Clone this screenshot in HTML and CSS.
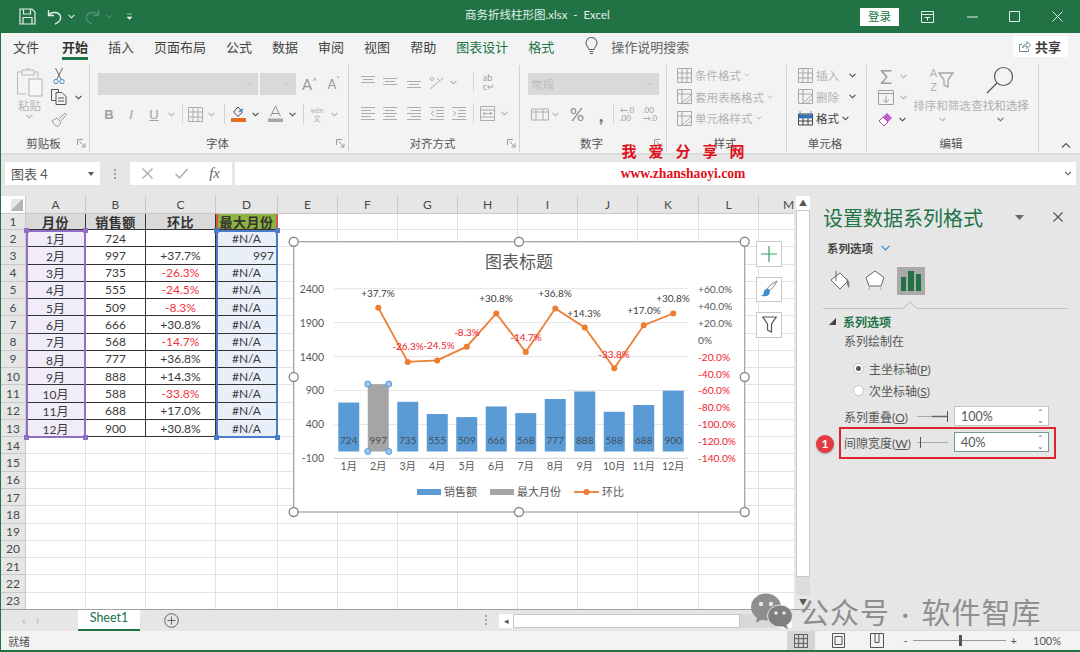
FILE: index.html
```html
<!DOCTYPE html>
<html lang="zh-CN">
  <head>
    <meta charset="UTF-8" />
    <title>商务折线柱形图.xlsx - Excel</title>
    <link rel="stylesheet" href="styles.css">
  </head>
  <body>
    <svg class="sprites" width="0" height="0">
      <symbol id="chev" viewBox="0 0 7 5"><path d="M.6.8 3.5 3.8 6.4.8" fill="none" stroke="currentColor" stroke-width="1.1"/></symbol>
      <symbol id="launch" viewBox="0 0 9 9"><path d="M.5 6V.5H6M2.5 2.5 8 8M8 4.5V8H4.5" fill="none" stroke="currentColor"/></symbol>
      <symbol id="al-top" viewBox="0 0 14 14"><path d="M0 1.5h14M2 4.5h10M0 7.5h14" fill="none" stroke="currentColor"/></symbol>
      <symbol id="al-mid" viewBox="0 0 14 14"><path d="M0 3.5h14M2 6.5h10M0 9.5h14" fill="none" stroke="currentColor"/></symbol>
      <symbol id="al-bot" viewBox="0 0 14 14"><path d="M0 6.5h14M2 9.5h10M0 12.5h14" fill="none" stroke="currentColor"/></symbol>
      <symbol id="al-left" viewBox="0 0 14 14"><path d="M0 1.5h14M0 4.5h10M0 7.5h14M0 10.5h10M0 13.5h14" fill="none" stroke="currentColor"/></symbol>
      <symbol id="al-center" viewBox="0 0 14 14"><path d="M0 1.5h14M2 4.5h10M0 7.5h14M2 10.5h10M0 13.5h14" fill="none" stroke="currentColor"/></symbol>
      <symbol id="al-right" viewBox="0 0 14 14"><path d="M0 1.5h14M4 4.5h10M0 7.5h14M4 10.5h10M0 13.5h14" fill="none" stroke="currentColor"/></symbol>
      <symbol id="indent-l" viewBox="0 0 14 14"><path d="M0 1.5h14M6 4.5h8M6 7.5h8M6 10.5h8M0 13.5h14M4 5 1 7.5 4 10" fill="none" stroke="currentColor"/></symbol>
      <symbol id="indent-r" viewBox="0 0 14 14"><path d="M0 1.5h14M6 4.5h8M6 7.5h8M6 10.5h8M0 13.5h14M1 5l3 2.5L1 10" fill="none" stroke="currentColor"/></symbol>
      <symbol id="table-a" viewBox="0 0 15 15"><path d="M.5.5h14v14H.5zM.5 5h14M.5 10h14M5 .5v14M10 .5v14" fill="none" stroke="currentColor"/></symbol>
      <symbol id="table-b" viewBox="0 0 15 15"><path d="M.5.5h14v14H.5zM.5 5h14M5 .5v14M5 14 14 6M9 14l5-4" fill="none" stroke="currentColor"/></symbol>
    </svg>

    <div class="app">
      <header class="titlebar">
        <div class="quick">
          <svg class="q-save" width="17" height="17" viewBox="0 0 17 17"><path d="M1 1h12l3 3v12H1zM4.5 1v5h7V1M4 16V9.500h9V16" fill="none" stroke="currentColor" stroke-width="1.2"/></svg>
          <svg class="q-undo" width="15" height="16" viewBox="0 0 15 16"><path d="M1.500 1v5.500H7M1.500 6.500C4 2.500 12 2 13.500 7.500c.8 3.500-2 6.500-5.500 7.500" fill="none" stroke="currentColor" stroke-width="1.4"/></svg>
          <svg class="q-chev" width="7" height="5"><use href="#chev"/></svg>
          <svg class="q-redo" width="15" height="16" viewBox="0 0 15 16"><path d="M13.500 1v5.500H8M13.500 6.500C11 2.500 3 2 1.500 7.500.7 11 3.500 14 7 15" fill="none" stroke="currentColor" stroke-width="1.4"/></svg>
          <svg class="q-chev dim" width="7" height="5"><use href="#chev"/></svg>
          <svg class="q-more" width="7" height="7" viewBox="0 0 7 7"><path d="M1 1h5M1 4h5L3.500 6.500z" fill="currentColor" stroke="currentColor" stroke-width=".6"/></svg>
        </div>
        <div class="doc-title">商务折线柱形图.xlsx&nbsp; - &nbsp;Excel</div>
        <div class="window-btns">
          <span class="login">登录</span>
          <svg class="w-restore" width="13" height="12" viewBox="0 0 13 12"><path d="M.5.5h12v11H.5zM.5 3.500h12M3.500 6.500h6M6.500 9.500v-3" fill="none" stroke="currentColor"/></svg>
          <svg class="w-min" width="11" height="2"><path d="M0 1h11" stroke="currentColor"/></svg>
          <svg class="w-max" width="11" height="11"><path d="M.5.5h10v10H.5z" fill="none" stroke="currentColor"/></svg>
          <svg class="w-close" width="11" height="11"><path d="M.5.5l10 10M10.500.5l-10 10" stroke="currentColor"/></svg>
        </div>
      </header>

      <nav class="tabs">
        <span class="tab first">文件</span>
        <span class="tab active">开始</span>
        <span class="tab">插入</span>
        <span class="tab">页面布局</span>
        <span class="tab">公式</span>
        <span class="tab">数据</span>
        <span class="tab">审阅</span>
        <span class="tab">视图</span>
        <span class="tab">帮助</span>
        <span class="tab ctx">图表设计</span>
        <span class="tab ctx">格式</span>
        <svg class="bulb" width="13" height="18" viewBox="0 0 13 18"><path d="M4 12.500C3.500 10 1 9.500 1 6a5.500 5.500 0 0 1 11 0c0 3.500-2.500 4-3 6.500zM4.500 14.500h4M5 16.500h3" fill="none" stroke="#666" stroke-width="1.1"/></svg>
        <span class="tell-me">操作说明搜索</span>
        <span class="share">
          <svg width="12" height="12" viewBox="0 0 12 12"><path d="M3 4.500H.5v7h9V9M3.500 8C4 5 6 4 8 4V1.500L11.500 5 8 8.500V6C6 6 4.500 6.500 3.500 8z" fill="none" stroke="#6a8d9c"/></svg>
          <b>共享</b>
        </span>
      </nav>

      <section class="ribbon">
        <div class="rb-group g-clip">
          <div class="rb-body clip-body">
            <div class="paste">
              <svg width="27" height="30" viewBox="0 0 27 30"><path d="M6 4H1.500v22H10M18 4h4v6M6 2h12v5H6zM10 2c0-2 4-2 4 0" fill="none" stroke="#b9b9b9"/><path d="M13 11h13v17H13z" fill="#f7f7f7" stroke="#b0b0b0"/></svg>
              <span class="dim-text">粘贴</span>
              <svg class="chev" width="7" height="5"><use href="#chev"/></svg>
            </div>
            <div class="clip-tools">
              <svg class="cut" width="12" height="17" viewBox="0 0 12 17"><path d="M2.500 0 8 11M9.500 0 4 11" stroke="#666" fill="none"/><circle cx="3" cy="13.500" r="2.200" fill="none" stroke="#4a90c8"/><circle cx="9" cy="13.500" r="2.200" fill="none" stroke="#4a90c8"/></svg>
              <div class="copy-row">
                <svg width="16" height="16" viewBox="0 0 16 16"><path d="M5 11.500H.5V.5h7V3M5 3.500h6l4 4v8H5zM7 9h6M7 12h6" fill="none" stroke="#555"/></svg>
                <svg class="chev dark" width="7" height="5"><use href="#chev"/></svg>
              </div>
              <svg class="brush" width="16" height="15" viewBox="0 0 16 15"><path d="M1 9l5-3 4 5-3 3.500C5 14 2 12 1 9zM8 7l6-6 1.500 1.500L10 9" fill="none" stroke="#9a9a9a"/></svg>
            </div>
          </div>
          <div class="rb-label"><i></i><span>剪贴板</span><svg width="9" height="9"><use href="#launch"/></svg></div>
        </div>

        <div class="rb-group g-font">
          <div class="rb-body">
            <div class="font-top">
              <span class="combo c-name"><svg width="6" height="4"><use href="#chev"/></svg></span>
              <span class="combo c-size"><svg width="6" height="4"><use href="#chev"/></svg></span>
              <span class="grow-a">A<sup>^</sup></span>
              <span class="shrink-a">A<sup>ˇ</sup></span>
            </div>
            <div class="tool-row font-tools">
              <b class="glyph">B</b>
              <i class="glyph">I</i>
              <u class="glyph">U</u>
              <svg width="7" height="5"><use href="#chev"/></svg>
              <span class="sep"></span>
              <svg width="15" height="15"><use href="#table-a"/></svg>
              <svg width="7" height="5"><use href="#chev"/></svg>
              <span class="sep"></span>
              <svg width="15" height="16" viewBox="0 0 15 16"><path d="M7 1 2.500 6 7 10.500 11.500 6z" fill="none" stroke="#444"/><path d="M8 6l4-3" stroke="#2a7fc0" stroke-width="1.5"/><path d="M0 12h15v4H0z" fill="#e2701f"/></svg>
              <svg class="dark" width="7" height="5"><use href="#chev"/></svg>
              <svg width="15" height="16" viewBox="0 0 15 16"><path d="M2.500 10.500 7.500 0l5 10.500M4 7.500h7" fill="none" stroke="#8f8f8f"/><path d="M0 12.500h15V16H0z" fill="#a6a6a6"/></svg>
              <svg class="dark" width="7" height="5"><use href="#chev"/></svg>
              <span class="sep"></span>
              <span class="wen">wén<br>文</span>
              <svg width="7" height="5"><use href="#chev"/></svg>
            </div>
          </div>
          <div class="rb-label"><i></i><span>字体</span><svg width="9" height="9"><use href="#launch"/></svg></div>
        </div>

        <div class="rb-group g-align">
          <div class="rb-body">
            <div class="tool-row align-one">
              <svg width="14" height="14"><use href="#al-top"/></svg>
              <svg width="14" height="14"><use href="#al-mid"/></svg>
              <svg width="14" height="14"><use href="#al-bot"/></svg>
              <svg width="15" height="15" viewBox="0 0 15 15"><path d="M1 14 14 3M3 2l2 2-2 2-2-2zM8 3l3 3" fill="none" stroke="currentColor"/></svg>
              <svg width="7" height="5"><use href="#chev"/></svg>
              <i></i>
              <span class="sep"></span>
              <span class="wrap-ab">ab<br>c↵</span>
            </div>
            <div class="tool-row align-two">
              <svg width="14" height="14"><use href="#al-left"/></svg>
              <svg width="14" height="14"><use href="#al-center"/></svg>
              <svg width="14" height="14"><use href="#al-right"/></svg>
              <svg width="14" height="14"><use href="#indent-l"/></svg>
              <svg width="14" height="14"><use href="#indent-r"/></svg>
              <span class="sep"></span>
              <svg width="15" height="15" viewBox="0 0 15 15"><path d="M.5.5h14v14H.5zM.5 4h14M.5 11h14M3 7.500h9M3 7.500l2-1.500M3 7.500 5 9M12 7.500 10 6M12 7.500 10 9" fill="none" stroke="currentColor"/></svg>
              <svg width="7" height="5"><use href="#chev"/></svg>
            </div>
          </div>
          <div class="rb-label"><i></i><span>对齐方式</span><svg width="9" height="9"><use href="#launch"/></svg></div>
        </div>

        <div class="rb-group g-number">
          <div class="rb-body">
            <div class="font-top">
              <span class="combo c-format">常规<svg width="6" height="4"><use href="#chev"/></svg></span>
            </div>
            <div class="tool-row number-tools">
              <svg width="18" height="14" viewBox="0 0 18 14"><path d="M.5 2h17v11H.5zM.5 5h17M5 2v11M12 2v11" fill="none" stroke="currentColor"/></svg>
              <svg width="7" height="5"><use href="#chev"/></svg>
              <span class="percent">%</span>
              <b class="comma">,</b>
              <span class="sep"></span>
              <span class="decimal">←.0<br>.00</span>
              <i></i>
              <span class="decimal">.00<br>→.0</span>
            </div>
          </div>
          <div class="rb-label"><i></i><span>数字</span><svg width="9" height="9"><use href="#launch"/></svg></div>
        </div>

        <div class="rb-group g-styles">
          <div class="rb-body stack">
            <div class="menu-row dim-text"><svg width="15" height="15"><use href="#table-a"/></svg>条件格式<svg width="6" height="4"><use href="#chev"/></svg></div>
            <div class="menu-row dim-text"><svg width="15" height="15"><use href="#table-b"/></svg>套用表格格式<svg width="6" height="4"><use href="#chev"/></svg></div>
            <div class="menu-row dim-text"><svg width="15" height="15"><use href="#table-b"/></svg>单元格样式<svg width="6" height="4"><use href="#chev"/></svg></div>
          </div>
          <div class="rb-label"><i></i><span>样式</span><i></i></div>
        </div>

        <div class="rb-group g-cells">
          <div class="rb-body stack">
            <div class="menu-row dim-text"><svg width="15" height="15"><use href="#table-a"/></svg>插入<svg class="dark wide" width="7" height="5"><use href="#chev"/></svg></div>
            <div class="menu-row dim-text"><svg width="15" height="15"><use href="#table-b"/></svg>删除<svg class="dark wide" width="7" height="5"><use href="#chev"/></svg></div>
            <div class="menu-row on"><svg width="15" height="15" viewBox="0 0 15 15"><path d="M.5 3h14v11H.5zM.5 6.500h14M.5 10h14M5 3v11M10 3v11" fill="none" stroke="#444"/><path d="M2 0v5M13 0v5M1 4h13v3H1z" fill="#2e75b6" stroke="#2e75b6" stroke-width=".7"/></svg>格式<svg class="dark" width="7" height="5"><use href="#chev"/></svg></div>
          </div>
          <div class="rb-label"><i></i><span>单元格</span><i></i></div>
        </div>

        <div class="rb-group g-edit">
          <div class="rb-body edit-body">
            <div class="edit-small">
              <div class="edit-row"><span class="sigma">Σ</span><svg width="7" height="5"><use href="#chev"/></svg></div>
              <div class="edit-row"><svg width="16" height="15" viewBox="0 0 16 15"><path d="M.5.5h15v14H.5zM.5 3.500h15M8 5.500v7M5 10l3 2.500 3-2.500" fill="none" stroke="#a0a0a0"/></svg><svg width="7" height="5"><use href="#chev"/></svg></div>
              <div class="edit-row"><svg width="15" height="15" viewBox="0 0 15 15"><path d="M1 9l8-8 5 5-8 8z" fill="#c05fc7"/><path d="M1 9l4-4 5 5-4 4z" fill="#fff" stroke="#a54cb0"/></svg><svg class="dark" width="7" height="5"><use href="#chev"/></svg></div>
            </div>
            <div class="edit-big dim-text">
              <div class="az-filter">
                <span class="az">A<br>Z</span>
                <svg width="16" height="16" viewBox="0 0 16 16"><path d="M1 1h14l-5 7v7l-4-2V8z" fill="none" stroke="#a6a6a6" stroke-width="1.3"/></svg>
              </div>
              <span class="big-name">排序和筛选</span>
              <svg width="7" height="5"><use href="#chev"/></svg>
            </div>
            <div class="edit-big">
              <svg width="28" height="28" viewBox="0 0 28 28"><circle cx="17.500" cy="10.500" r="9" fill="none" stroke="#555" stroke-width="1.2"/><path d="M11 17 1 27" stroke="#555" stroke-width="1.2"/></svg>
              <span class="big-name">查找和选择</span>
              <svg width="7" height="5"><use href="#chev"/></svg>
            </div>
          </div>
          <div class="rb-label"><i></i><span>编辑</span><i></i></div>
        </div>

        <svg class="collapse" width="10" height="6" viewBox="0 0 10 6"><path d="M1 5.500 5 1.500l4 4" fill="none" stroke="#555" stroke-width="1.1"/></svg>
      </section>

      <section class="formula">
        <div class="namebox">图表 4<svg width="6" height="4" viewBox="0 0 6 4"><path d="M0 0h6L3 4z" fill="#555"/></svg></div>
        <div class="dots"></div>
        <div class="fx-box">
          <svg width="11" height="11"><path d="M.5.5l10 10M10.500.5l-10 10" stroke="#a8a8a8" stroke-width="1.2"/></svg>
          <svg width="13" height="11"><path d="M.5 6l4 4 8-9" fill="none" stroke="#a8a8a8" stroke-width="1.4"/></svg>
          <span class="fx">fx</span>
        </div>
        <div class="formula-input"><svg width="8" height="5"><use href="#chev"/></svg></div>
      </section>

      <main class="workspace">
        <div class="sheet-col">
          <div class="sheet-row">
            <div class="sheet" id="sheet"></div>
            <div class="vscroll">
              <span class="v-up"></span>
              <span class="v-thumb"></span>
              <span class="v-down"></span>
            </div>
          </div>
          <div class="sheetbar">
            <span class="nav-arrows">‹ &nbsp; ›</span>
            <span class="sheet-tab">Sheet1</span>
            <svg class="add-sheet" width="15" height="15" viewBox="0 0 15 15"><circle cx="7.500" cy="7.500" r="6.800" fill="none" stroke="#666"/><path d="M3.500 7.500h8M7.500 3.500v8" stroke="#666"/></svg>
            <span class="split-dots"></span>
            <span class="hscroll">
              <span class="h-btn">◂</span>
              <span class="h-thumb"></span>
              <span class="h-track"></span>
              <span class="h-btn">▸</span>
            </span>
          </div>
        </div>

        <aside class="pane">
          <div class="pane-head">
            <h2>设置数据系列格式</h2>
            <svg class="pane-menu" width="9" height="5"><path d="M0 0h9L4.500 5z" fill="#666"/></svg>
            <svg class="pane-close" width="10" height="10"><path d="M.5.5l9 9M9.500.5l-9 9" stroke="#555" stroke-width="1.2"/></svg>
          </div>
          <div class="pane-sub">系列选项<svg width="9" height="6" viewBox="0 0 9 6"><path d="M.5.8 4.500 5 8.500.8" fill="none" stroke="#2e8bd0" stroke-width="1.1"/></svg></div>
          <div class="pane-icons">
            <span class="p-icon">
              <svg width="22" height="22" viewBox="0 0 22 22"><path d="M1 10 10 3l8 8-8 8z" fill="#fff" stroke="#666"/><path d="M6 1v10" stroke="#666"/><path d="M16 8c3 2 4 6 3 10-2-2-2-5-3-10z" fill="#777"/></svg>
            </span>
            <span class="p-icon">
              <svg width="20" height="24" viewBox="0 0 20 24"><path d="M10 2 19 8.500 16 17H4L1 8.500z" fill="#fff" stroke="#666"/><path d="M4 21c0-2 1-3 2-4M16 21c0-2-1-3-2-4" fill="none" stroke="#aaa"/></svg>
            </span>
            <span class="p-icon selected">
              <svg width="20" height="20" viewBox="0 0 20 20"><path d="M0 6h5v14H0zM7 0h6v20H7zM15 3h5v17h-5z" fill="#217346"/></svg>
            </span>
          </div>
          <div class="pane-rule"></div>
          <div class="sec-head"><svg width="7" height="7"><path d="M7 0v7H0z" fill="#444"/></svg>系列选项</div>
          <div class="sec-text">系列绘制在</div>
          <label class="radio r-first"><span class="dot checked"></span><span>主坐标轴(<u>P</u>)</span></label>
          <label class="radio"><span class="dot"></span><span>次坐标轴(<u>S</u>)</span></label>
          <div class="field f-overlap">
            <span class="f-name">系列重叠(<u>O</u>)</span>
            <svg class="slider" width="31" height="11"><path d="M0 5.500h30" stroke="#aaa"/><path d="M15 5.500h15" stroke="#666" stroke-width="1.5"/><path d="M30.500 0v11" stroke="#555"/></svg>
            <span class="spin">100%<span class="spin-btns">⌃<br>⌄</span></span>
          </div>
          <div class="field f-gap">
            <span class="f-name">间隙宽度(<u>W</u>)</span>
            <svg class="slider" width="31" height="11"><path d="M0 5.500h31" stroke="#aaa"/><path d="M3.500 0v11" stroke="#555"/></svg>
            <span class="spin focus">40%<span class="spin-btns">⌃<br>⌄</span></span>
          </div>
          <div class="callout"></div>
          <div class="badge">1</div>
        </aside>
      </main>

      <footer class="statusbar">
        <span>就绪</span>
        <span class="views">
          <span class="view on"><svg width="14" height="14"><use href="#table-a"/></svg></span>
          <span class="view"><svg width="13" height="15" viewBox="0 0 13 15"><path d="M.5.5h12v14H.5zM3 3.500h7v8H3z" fill="none" stroke="#555"/></svg></span>
          <span class="view"><svg width="14" height="15" viewBox="0 0 14 15"><path d="M.5.5h13v14H.5zM5 .5v9h4v-9" fill="none" stroke="#555"/></svg></span>
        </span>
        <span class="zoom-bar">
          <span>-</span>
          <span class="zoom-track"><i></i></span>
          <span>+</span>
        </span>
        <span class="zoom-val">100%</span>
      </footer>

      <svg class="chart" id="chart" viewBox="285 230 475 290"></svg>
      <div class="chart-tools">
        <span><svg width="16" height="16"><path d="M8 0v16M0 8h16" stroke="#3aa35f" stroke-width="1.2"/></svg></span>
        <span><svg width="18" height="18" viewBox="0 0 18 18"><path d="M17 1C13 3 9 6 7 9l2 2c3-2 6-6 8-10z" fill="#fff" stroke="#666" stroke-width=".8"/><path d="M7 9c-3 0-3 3-3.500 5-.5 1-1.500 1.500-3 1.500 3 1.500 8 1 9-2 .5-2 .5-3-.5-4.500z" fill="#3b8ed0"/></svg></span>
        <span><svg width="15" height="17" viewBox="0 0 15 17"><path d="M.8 1h13.400L9.500 8v8l-4-2V8z" fill="none" stroke="#555" stroke-width="1.2"/></svg></span>
      </div>

      <div class="stamp">
        <div class="stamp-cn">我爱分享网</div>
        <div class="stamp-url">www.zhanshaoyi.com</div>
      </div>

      <div class="wx-mark">
        <svg width="42" height="36" viewBox="0 0 42 36"><ellipse cx="15" cy="14" rx="15" ry="13.500" fill="#8e8e8e"/><path d="M6 23l-1 7 7-4z" fill="#8e8e8e"/><circle cx="10" cy="11" r="2.200" fill="#e6e6e6"/><circle cx="20" cy="11" r="2.200" fill="#e6e6e6"/><ellipse cx="29" cy="23" rx="12.500" ry="11" fill="#7f7f7f" stroke="#e6e6e6"/><path d="M35 31l2 5-6-3z" fill="#7f7f7f"/><circle cx="25" cy="20" r="1.800" fill="#e6e6e6"/><circle cx="33" cy="20" r="1.800" fill="#e6e6e6"/></svg>
        <span>公众号 · 软件智库</span>
      </div>
    </div>

    <script src="app.js"></script>
  </body>
</html>
```

FILE: styles.css
```css
* {
  box-sizing: border-box;
}

html,
body {
  margin: 0;
  padding: 0;
}

body {
  font-family: Lato, "Noto Sans CJK SC", sans-serif;
  font-size: 12px;
  color: #444;
}

.sprites {
  position: absolute;
}

.app {
  position: relative;
  display: flex;
  flex-direction: column;
  width: 1080px;
  height: 652px;
  overflow: hidden;
  background-color: #e6e6e6;
  border-left: 1px solid #217346;
  border-bottom: 2px solid #217346;
}

svg {
  flex: none;
  display: block;
}

/* title bar */
.titlebar {
  position: relative;
  display: flex;
  flex: none;
  align-items: center;
  height: 33px;
  background-color: #217346;
  color: #e2efe8;
}

.quick {
  display: flex;
  align-items: center;
  padding-left: 18px;
}

.q-undo {
  margin-left: 11px;
}

.q-chev {
  margin-left: 6px;
}

.q-redo {
  margin-left: 10px;
  color: #4f9071;
}

.q-chev.dim {
  color: #4f9071;
}

.q-more {
  margin-left: 13px;
}

.doc-title {
  position: absolute;
  left: 464px;
  top: 6px;
  font-size: 11.5px;
}

.window-btns {
  display: flex;
  align-items: center;
  margin-left: auto;
  padding-right: 17px;
}

.login {
  width: 39px;
  height: 18px;
  line-height: 17px;
  text-align: center;
  background-color: #fff;
  color: #217346;
  font-size: 11.5px;
}

.w-restore {
  margin-left: 22px;
}

.w-min {
  margin-left: 33px;
}

.w-max {
  margin-left: 31px;
}

.w-close {
  margin-left: 32px;
}

/* tabs */
.tabs {
  display: flex;
  flex: none;
  align-items: center;
  height: 30px;
  padding: 0 0 4px 12px;
  background-color: #f3f3f3;
  font-size: 13px;
  color: #444;
}

.tab {
  position: relative;
  margin-right: 20px;
  white-space: nowrap;
}

.tab.first {
  margin-right: 23px;
}

.tab.active {
  font-weight: 700;
  color: #333;
}

.tab.active::after {
  content: "";
  position: absolute;
  left: 0;
  right: 0;
  bottom: -4px;
  height: 3px;
  background-color: #217346;
}

.tab.ctx {
  color: #217346;
}

.bulb {
  margin-left: 11px;
}

.tell-me {
  margin-left: 13px;
  color: #666;
}

.share {
  display: flex;
  align-items: center;
  gap: 4px;
  width: 55px;
  height: 21px;
  margin-left: auto;
  margin-right: 12px;
  padding-left: 6px;
  background-color: #fff;
  font-size: 13px;
  color: #3b3b3b;
}

/* ribbon */
.ribbon {
  position: relative;
  display: flex;
  flex: none;
  height: 92px;
  background-color: #f3f3f3;
  border-bottom: 2px solid #dcdcdc;
}

.rb-group {
  display: flex;
  flex: none;
  flex-direction: column;
  height: 87px;
  margin-top: 2px;
  border-right: 1px solid #d2d2d2;
}

.g-clip { width: 89px; }
.g-font { width: 259px; }
.g-align { width: 171px; }
.g-number { width: 147px; }
.g-styles { width: 120px; }
.g-cells { width: 80px; }
.g-edit { width: 172px; }

.rb-body {
  flex: 1;
  padding-top: 8px;
  color: #adadad;
}

.rb-label {
  display: grid;
  grid-template-columns: 1fr auto 1fr;
  align-items: center;
  height: 18px;
  padding-right: 3px;
  color: #555;
  font-size: 11.5px;
  text-align: center;
}

.rb-label svg {
  justify-self: end;
  color: #9a9a9a;
}

.dim-text {
  color: #b4b4b4;
}

.clip-body {
  display: flex;
  padding-top: 3px;
  padding-left: 15px;
}

.paste {
  display: flex;
  flex-direction: column;
  align-items: center;
  width: 27px;
}

.paste span {
  margin-top: -1px;
  font-size: 11.5px;
}

.paste .chev {
  margin-top: 1px;
}

.clip-tools {
  margin-left: 8px;
}

.cut {
  margin-left: 2px;
}

.copy-row {
  display: flex;
  align-items: center;
  gap: 8px;
  margin-top: 4px;
}

.brush {
  margin-top: 7px;
}

.dark {
  color: #444;
}

.font-top {
  display: flex;
  align-items: center;
  height: 22px;
  padding-left: 8px;
}

.combo {
  display: flex;
  align-items: center;
  justify-content: flex-end;
  height: 22px;
  padding-right: 6px;
  background-color: #d9d9d9;
  color: #bdbdbd;
}

.c-name {
  width: 160px;
}

.c-size {
  width: 36px;
  margin-left: 2px;
}

.c-format {
  justify-content: space-between;
  width: 131px;
  padding-left: 3px;
  font-size: 11.5px;
}

.grow-a,
.shrink-a {
  font-size: 15px;
  color: #9a9a9a;
}

.grow-a sup,
.shrink-a sup {
  font-size: 9px;
  line-height: 0;
}

.grow-a {
  margin-left: 6px;
}

.shrink-a {
  margin-left: 10px;
  font-size: 13px;
}

.tool-row {
  display: grid;
  align-items: center;
  justify-items: center;
  height: 22px;
  margin-top: 8px;
}

.font-tools {
  grid-template-columns: 20px 24px 22px 12px 10px 17px 15px 10px 18px 17px 22px 12px 10px 18px 16px;
  margin-left: 9px;
}

.glyph {
  font-size: 13px;
  font-family: "Liberation Sans", sans-serif;
  color: #a0a0a0;
}

.sep {
  width: 1px;
  height: 20px;
  background-color: #d2d2d2;
}

.wen {
  font-size: 7px;
  line-height: 8px;
  text-align: center;
  color: #b0b0b0;
}

.align-one {
  grid-template-columns: 18px 26px 21px 25px 8px 8px 16px 16px;
  margin-top: -2px;
  margin-left: 10px;
}

.align-two {
  grid-template-columns: 18px 26px 21px 25px 20px 8px 20px 14px;
  margin-top: 9px;
  margin-left: 10px;
}

.wrap-ab {
  font-size: 9px;
  line-height: 9px;
  color: #a0a0a0;
}

.number-tools {
  grid-template-columns: 24px 7px 36px 12px 12px 16px 7px 16px;
  margin-left: 8px;
}

.percent {
  font-size: 18px;
  color: #8f8f8f;
}

.comma {
  font-size: 20px;
  line-height: 12px;
  color: #777;
}

.decimal {
  font-size: 8px;
  line-height: 8px;
  white-space: nowrap;
  color: #9a9a9a;
}

.stack {
  display: flex;
  flex-direction: column;
  gap: 1.5px;
  padding-top: 0;
  padding-left: 10px;
}

.g-cells .stack {
  padding-left: 11px;
}

.menu-row {
  display: flex;
  align-items: center;
  height: 20px;
  font-size: 11.5px;
  white-space: nowrap;
}

.menu-row svg:first-child {
  margin-right: 3px;
  color: #a8a8a8;
}

.menu-row svg:last-child {
  margin-left: 3px;
}

.menu-row svg.wide {
  margin-left: 10px;
}

.menu-row.on {
  color: #444;
}

.edit-body {
  display: flex;
  padding-top: 1px;
}

.edit-small {
  display: flex;
  flex-direction: column;
  gap: 1.5px;
  width: 46px;
  padding-left: 11px;
}

.edit-row {
  display: flex;
  align-items: center;
  gap: 6px;
  height: 20px;
}

.sigma {
  width: 16px;
  text-align: center;
  font-size: 20px;
  line-height: 20px;
  color: #a0a0a0;
}

.edit-big {
  display: flex;
  flex-direction: column;
  align-items: center;
  width: 58px;
  font-size: 11.5px;
  white-space: nowrap;
}

.az-filter {
  display: flex;
  align-items: center;
  gap: 1px;
  height: 28px;
}

.az {
  font-size: 11px;
  line-height: 14px;
  text-align: center;
  color: #b0b0b0;
}

.big-name {
  height: 17px;
  margin-top: 3px;
}

.edit-big > svg:last-child {
  margin-top: 3px;
  color: #666;
}

.edit-big.dim-text > svg:last-child {
  color: #b4b4b4;
}

.collapse {
  position: absolute;
  left: 1060px;
  top: 79px;
}

/* formula bar */
.formula {
  display: flex;
  flex: none;
  align-items: center;
  height: 35px;
  padding: 7px 4px 5px 4px;
}

.namebox,
.fx-box,
.formula-input {
  display: flex;
  align-items: center;
  height: 23px;
  background-color: #fff;
}

.namebox {
  justify-content: space-between;
  width: 95px;
  padding: 0 6px;
  font-size: 13px;
  color: #555;
}

.dots {
  width: 2px;
  height: 10px;
  margin: 0 14px;
  background-image: linear-gradient(#a0a0a0 50%, transparent 50%);
  background-size: 2px 4px;
}

.fx-box {
  justify-content: space-between;
  width: 102px;
  padding: 0 12px;
}

.fx {
  font-family: "Liberation Serif", serif;
  font-style: italic;
  font-size: 15px;
  color: #666;
}

.formula-input {
  justify-content: flex-end;
  width: 841px;
  margin-left: 3px;
  padding-right: 4px;
  color: #555;
}

/* sheet */
.workspace {
  display: flex;
  flex: 1;
  min-height: 0;
}

.sheet-col {
  display: flex;
  flex: none;
  flex-direction: column;
  width: 810px;
}

.sheet-row {
  display: flex;
  padding-top: 6px;
}

.sheet {
  position: relative;
  display: grid;
  grid-template-columns: 25px 60px 60px 70px 62px 60px 60px 60px 60px 60px 60px 61px 60px 60px;
  grid-template-rows: 18px 16px repeat(22, 17.27px);
  flex: none;
  width: 793px;
  height: 413px;
  background-color: #fff;
  font-size: 12px;
  overflow: hidden;
}

.c {
  display: flex;
  align-items: center;
  justify-content: center;
  border-right: 1px solid #e3e3e3;
  border-bottom: 1px solid #e3e3e3;
  white-space: nowrap;
  overflow: hidden;
  color: #3a3a3a;
}

.h {
  background-color: #e6e6e6;
  border-right-color: #c8c8c8;
  border-bottom-color: #c8c8c8;
  color: #4a4a4a;
}

.corner {
  background: linear-gradient(135deg, #e6e6e6 50%, #b5b5b5 50%);
  background-size: 12px 12px;
  background-repeat: no-repeat;
  background-position: right 2px bottom 2px;
}

.d {
  border-right-color: #333;
  border-bottom-color: #333;
}

.top {
  background-color: #d9d9d9;
  font-weight: 700;
  font-size: 13px;
  letter-spacing: .5px;
  color: #333;
}

.top.green {
  background-color: #8eb33f;
}

.month {
  background-color: #f0ecf8;
}

.max {
  background-color: #e8eff9;
}

.num-r {
  justify-content: flex-end;
  padding-right: 3px;
}

.neg {
  color: #f0323c;
}

.range {
  position: absolute;
  pointer-events: none;
}

.range span {
  position: absolute;
  width: 5px;
  height: 5px;
}

.range-a {
  left: 25px;
  top: 34px;
  width: 60px;
  height: 208px;
  border: 2px solid #8f6fc4;
}

.range-d {
  left: 215px;
  top: 34px;
  width: 62px;
  height: 208px;
  border: 2px solid #4a7cc7;
}

.range-h {
  left: 215px;
  top: 18px;
  width: 62px;
  height: 16px;
  border-left: 2px solid #d9534f;
  border-right: 2px solid #d9534f;
}

.range-a span { background-color: #8f6fc4; }
.range-d span { background-color: #4a7cc7; }
.range-h span { display: none; }

.range span:nth-child(1) { left: -4px; top: -4px; }
.range span:nth-child(2) { right: -4px; top: -4px; }
.range span:nth-child(3) { left: -4px; bottom: -4px; }
.range span:nth-child(4) { right: -4px; bottom: -4px; }

.vscroll {
  display: flex;
  flex-direction: column;
  flex: none;
  width: 14px;
  height: 413px;
  margin-left: 2px;
  background-color: #dcdcdc;
}

.v-up,
.v-down {
  flex: none;
  height: 14px;
  background-color: #fff;
  color: #555;
  font-size: 8px;
  line-height: 14px;
  text-align: center;
}

.v-up::before {
  content: "▲";
}

.v-down::before {
  content: "▼";
}

.v-down {
  margin-top: auto;
  background-color: #e6e6e6;
}

.v-thumb {
  height: 367px;
  background-color: #fff;
  border: 1px solid #c8c8c8;
}

.sheetbar {
  position: relative;
  display: flex;
  flex: 1;
  align-items: flex-start;
  border-top: 1px solid #a0a0a0;
  background-color: #e6e6e6;
}

.nav-arrows {
  width: 77px;
  padding-left: 21px;
  font-size: 13px;
  line-height: 20px;
  color: #b8b8b8;
}

.sheet-tab {
  width: 62px;
  height: 21px;
  background-color: #fff;
  border-bottom: 2px solid #217346;
  color: #217346;
  font-size: 12.5px;
  line-height: 16px;
  text-align: center;
}

.add-sheet {
  margin: 3px 0 0 24px;
}

.split-dots {
  width: 2px;
  height: 12px;
  margin: 5px 0 0 306px;
  background-image: linear-gradient(#a8a8a8 50%, transparent 50%);
  background-size: 2px 4px;
}

.hscroll {
  display: flex;
  align-items: center;
  height: 14px;
  margin: 4px 0 0 12px;
}

.h-btn {
  width: 14px;
  height: 14px;
  font-size: 9px;
  line-height: 14px;
  text-align: center;
  background-color: #fff;
  color: #555;
}

.h-thumb {
  width: 227px;
  height: 14px;
  background-color: #fff;
  border: 1px solid #c8c8c8;
}

.h-track {
  width: 38px;
  height: 14px;
  background-color: #d8d8d8;
}

/* format pane */
.pane {
  position: relative;
  flex: none;
  width: 268px;
  padding: 13px 0 0 12px;
  font-size: 12px;
  color: #555;
}

.pane-head {
  display: flex;
  align-items: center;
  height: 28px;
}

.pane-head h2 {
  margin: 0;
  font-size: 20px;
  font-weight: 400;
  color: #217346;
}

.pane-menu {
  margin-left: 32px;
}

.pane-close {
  margin-left: 29px;
}

.pane-sub {
  display: flex;
  align-items: center;
  gap: 8px;
  height: 18px;
  margin: 8px 0 0 4px;
  font-weight: 700;
  font-size: 11.5px;
  color: #444;
}

.pane-icons {
  display: flex;
  align-items: center;
  height: 28px;
  margin-top: 10px;
  padding-left: 4px;
}

.p-icon {
  display: flex;
  align-items: center;
  justify-content: center;
  width: 28px;
  height: 28px;
  margin-right: 6px;
}

.p-icon.selected {
  margin-left: 2px;
  background-color: #a9a9a9;
}

.pane-rule {
  position: relative;
  width: 245px;
  height: 1px;
  margin-top: 13px;
  background-color: #c4c4c4;
}

.pane-rule::after {
  content: "";
  position: absolute;
  left: 82px;
  top: -5px;
  width: 9px;
  height: 9px;
  background-color: #e6e6e6;
  border-left: 1px solid #c4c4c4;
  border-top: 1px solid #c4c4c4;
  transform: rotate(45deg);
}

.sec-head {
  display: flex;
  align-items: center;
  gap: 7px;
  height: 18px;
  margin: 3px 0 0 6px;
  font-weight: 700;
  color: #217346;
}

.sec-text {
  height: 18px;
  margin: 3px 0 0 21px;
  line-height: 18px;
}

.radio {
  display: flex;
  align-items: center;
  gap: 5px;
  height: 18px;
  margin: 4px 0 0 30px;
}

.r-first {
  margin-top: 8px;
}

.dot {
  display: flex;
  align-items: center;
  justify-content: center;
  width: 11px;
  height: 11px;
  border-radius: 50%;
  background-color: #fff;
  border: 1px solid #c2c2c2;
}

.dot.checked::after {
  content: "";
  width: 5px;
  height: 5px;
  border-radius: 50%;
  background-color: #555;
}

.field {
  display: flex;
  align-items: center;
  height: 20px;
  margin: 7px 0 0 21px;
  white-space: nowrap;
}

.f-gap {
  margin-top: 6px;
}

.f-name {
  width: 73px;
}

.slider {
  margin-right: 6px;
}

.spin {
  position: relative;
  width: 95px;
  height: 20px;
  padding-left: 6px;
  line-height: 19px;
  font-size: 12.5px;
  background-color: #fff;
  border: 1px solid #c4c4c4;
}

.spin.focus {
  border-color: #6f9d85;
}

.spin-btns {
  position: absolute;
  right: 4px;
  top: 1px;
  font-size: 8px;
  line-height: 8px;
  color: #666;
}

.callout {
  position: absolute;
  left: 28px;
  top: 237px;
  width: 217px;
  height: 32px;
  border: 2px solid #dc2430;
  pointer-events: none;
}

.badge {
  position: absolute;
  left: 5px;
  top: 245px;
  width: 18px;
  height: 18px;
  border-radius: 50%;
  background-color: #e23b41;
  color: #fff;
  font-size: 12px;
  font-weight: 700;
  line-height: 18px;
  text-align: center;
  box-shadow: 0 1px 2px rgba(0, 0, 0, 0.3);
}

/* status bar */
.statusbar {
  display: flex;
  flex: none;
  align-items: center;
  height: 20px;
  padding-left: 7px;
  background-color: #f3f3f3;
  border-top: 1px solid #dadada;
  font-size: 11px;
  color: #555;
}

.views {
  display: flex;
  align-items: center;
  height: 19px;
  margin-left: auto;
}

.view {
  display: flex;
  align-items: center;
  justify-content: center;
  width: 28px;
  height: 19px;
  margin-right: 10px;
}

.view.on {
  background-color: #d5d5d5;
}

.zoom-bar {
  display: flex;
  align-items: center;
  gap: 5px;
  margin-left: 3px;
}

.zoom-track {
  position: relative;
  width: 93px;
  height: 1px;
  background-color: #9a9a9a;
}

.zoom-track i {
  position: absolute;
  left: 46px;
  top: -5px;
  width: 3px;
  height: 11px;
  background-color: #555;
}

.zoom-val {
  width: 29px;
  margin: 0 18px 0 16px;
  white-space: nowrap;
}

/* things lying over the sheet */
.chart {
  position: absolute;
  left: 284px;
  top: 230px;
  width: 475px;
  height: 290px;
  overflow: visible;
}

.chart text {
  font-family: Lato, "Noto Sans CJK SC", sans-serif;
  font-size: 10.5px;
  fill: #595959;
}

.chart .chart-title {
  font-size: 17px;
}

.chart .legend {
  font-size: 11px;
}

.chart .lab {
  font-size: 10px;
  fill: #404040;
}

.chart .red {
  fill: #f0222e;
  font-size: 10px;
}

.chart .axis-r {
  font-size: 10.2px;
}

.chart .in-bar {
  font-size: 10px;
  fill: #3f4f5c;
}

.chart-tools {
  position: absolute;
  left: 755px;
  top: 241px;
  display: flex;
  flex-direction: column;
  gap: 10px;
}

.chart-tools span {
  display: flex;
  align-items: center;
  justify-content: center;
  width: 26px;
  height: 25.5px;
  background-color: #fff;
  border: 1px solid #c8c8c8;
}

.stamp {
  position: absolute;
  left: 618px;
  top: 142px;
  width: 128px;
  text-align: center;
  color: #e0101c;
  font-weight: 700;
}

.stamp-cn {
  font-size: 15px;
  line-height: 19px;
  letter-spacing: 12px;
  margin-right: -12px;
}

.stamp-url {
  margin-top: 5px;
  font-family: "Liberation Serif", serif;
  font-size: 13.6px;
  line-height: 16px;
  white-space: nowrap;
}

.wx-mark {
  position: absolute;
  left: 750px;
  top: 590px;
  display: flex;
  align-items: center;
  gap: 7px;
  color: #8e8e8e;
  font-size: 29px;
  letter-spacing: 1px;
  word-spacing: 3px;
  white-space: nowrap;
  pointer-events: none;
}
```

FILE: app.js
```js
const months = ["1月", "2月", "3月", "4月", "5月", "6月", "7月", "8月", "9月", "10月", "11月", "12月"];
const sales = [724, 997, 735, 555, 509, 666, 568, 777, 888, 588, 688, 900];
const ratios = ["", "+37.7%", "-26.3%", "-24.5%", "-8.3%", "+30.8%", "-14.7%", "+36.8%", "+14.3%", "-33.8%", "+17.0%", "+30.8%"];

// where the ratio labels were dragged to in the chart (centre x, centre y)
const labelSpots = [null, [378, 293], [408, 346], [439, 345], [467, 332], [496, 298], [526, 337], [555, 293], [584, 313], [614, 354], [644, 310], [673, 298]];

function buildSheet() {
  const cols = ["", "A", "B", "C", "D", "E", "F", "G", "H", "I", "J", "K", "L", "M"];
  let html = cols.map((c, i) => `<div class="c h${i ? "" : " corner"}">${c}</div>`).join("");

  for (let r = 1; r <= 23; r++) {
    html += `<div class="c h">${r}</div>`;
    const i = r - 2;
    if (r === 1) {
      html += `<div class="c d top">月份</div><div class="c d top">销售额</div><div class="c d top">环比</div><div class="c d top green">最大月份</div>`;
    } else if (r <= 13) {
      const neg = ratios[i].startsWith("-") ? " neg" : "";
      html += `<div class="c d month">${months[i]}</div>`;
      html += `<div class="c d">${sales[i]}</div>`;
      html += `<div class="c d${neg}">${ratios[i]}</div>`;
      html += r === 3
        ? `<div class="c d max num-r">997</div>`
        : `<div class="c d max">#N/A</div>`;
    } else {
      html += `<div class="c"></div>`.repeat(4);
    }
    html += `<div class="c"></div>`.repeat(9);
  }

  const corners = "<span></span>".repeat(4);
  html += `<div class="range range-h">${corners}</div>`;
  html += `<div class="range range-a">${corners}</div>`;
  html += `<div class="range range-d">${corners}</div>`;
  document.getElementById("sheet").innerHTML = html;
}

function buildChart() {
  const left = 334;
  const step = 29.5;
  const barW = 21;
  const baseY = 451.5;
  const perUnit = 0.0676;
  const zeroY = 339.6;
  const perPct = 0.848;
  let s = "";

  // frame
  s += `<rect x="293.7" y="241.7" width="451" height="270.3" fill="#fff" stroke="#a6a6a6" stroke-width="1.3"/>`;
  s += `<text class="chart-title" x="519" y="268" text-anchor="middle">图表标题</text>`;

  // grid and left axis
  [2400, 1900, 1400, 900, 400, -100].forEach((v, i) => {
    const y = 288.7 + i * 33.92;
    s += `<path d="M${left} ${y}h354" stroke="${i === 5 ? "#cfcfcf" : "#e4e4e4"}"/>`;
    s += `<text x="324" y="${y + 4}" text-anchor="end">${v}</text>`;
  });

  // right axis
  ["+60.0%", "+40.0%", "+20.0%", "0%", "-20.0%", "-40.0%", "-60.0%", "-80.0%", "-100.0%", "-120.0%", "-140.0%"].forEach((v, i) => {
    const cls = v.startsWith("-") ? "axis-r red" : "axis-r";
    s += `<text class="${cls}" x="698" y="${288.7 + i * 16.96 + 4}">${v}</text>`;
  });

  // bars
  sales.forEach((v, i) => {
    const cx = left + step * (i + 0.5);
    const y = baseY - v * perUnit;
    s += `<rect x="${cx - barW / 2}" y="${y}" width="${barW}" height="${baseY - y}" fill="${i === 1 ? "#a5a5a5" : "#5b9bd5"}"/>`;
    s += `<text class="in-bar" x="${cx}" y="444" text-anchor="middle">${v}</text>`;
    s += `<text x="${cx}" y="470" text-anchor="middle">${months[i]}</text>`;
  });

  // selected bar handles
  const b = left + step * 1.5;
  [[b - barW / 2, 384], [b + barW / 2, 384], [b - barW / 2, baseY], [b + barW / 2, baseY]].forEach(([x, y]) => {
    s += `<circle cx="${x}" cy="${y}" r="3" fill="#9cc8f0" stroke="#4f94d8"/>`;
  });

  // ratio line
  const pts = ratios.map((r, i) => (r ? [left + step * (i + 0.5), zeroY - parseFloat(r) * perPct] : null)).filter(Boolean);
  s += `<polyline points="${pts.map((p) => p.join(",")).join(" ")}" fill="none" stroke="#ed7d31" stroke-width="1.8"/>`;
  pts.forEach((p) => {
    s += `<circle cx="${p[0]}" cy="${p[1]}" r="3" fill="#ed7d31"/>`;
  });
  ratios.forEach((r, i) => {
    if (!r) return;
    const [x, y] = labelSpots[i];
    s += `<text class="${r.startsWith("-") ? "red" : "lab"}" x="${x}" y="${y + 4}" text-anchor="middle">${r}</text>`;
  });

  // legend
  s += `<rect x="417" y="489" width="24" height="6" fill="#5b9bd5"/><text class="legend" x="444" y="496">销售额</text>`;
  s += `<rect x="490" y="489" width="24" height="6" fill="#a5a5a5"/><text class="legend" x="517" y="496">最大月份</text>`;
  s += `<path d="M574 492h25" stroke="#ed7d31" stroke-width="1.8"/><circle cx="586.5" cy="492" r="3" fill="#ed7d31"/><text class="legend" x="602" y="496">环比</text>`;

  // frame handles
  [[293.7, 241.7], [519, 241.7], [744.7, 241.7], [293.7, 377], [744.7, 377], [293.7, 512], [519, 512], [744.7, 512]].forEach(([x, y]) => {
    s += `<circle cx="${x}" cy="${y}" r="4.5" fill="#fff" stroke="#8c8c8c" stroke-width="1.4"/>`;
  });

  document.getElementById("chart").innerHTML = s;
}

buildSheet();
buildChart();
```
